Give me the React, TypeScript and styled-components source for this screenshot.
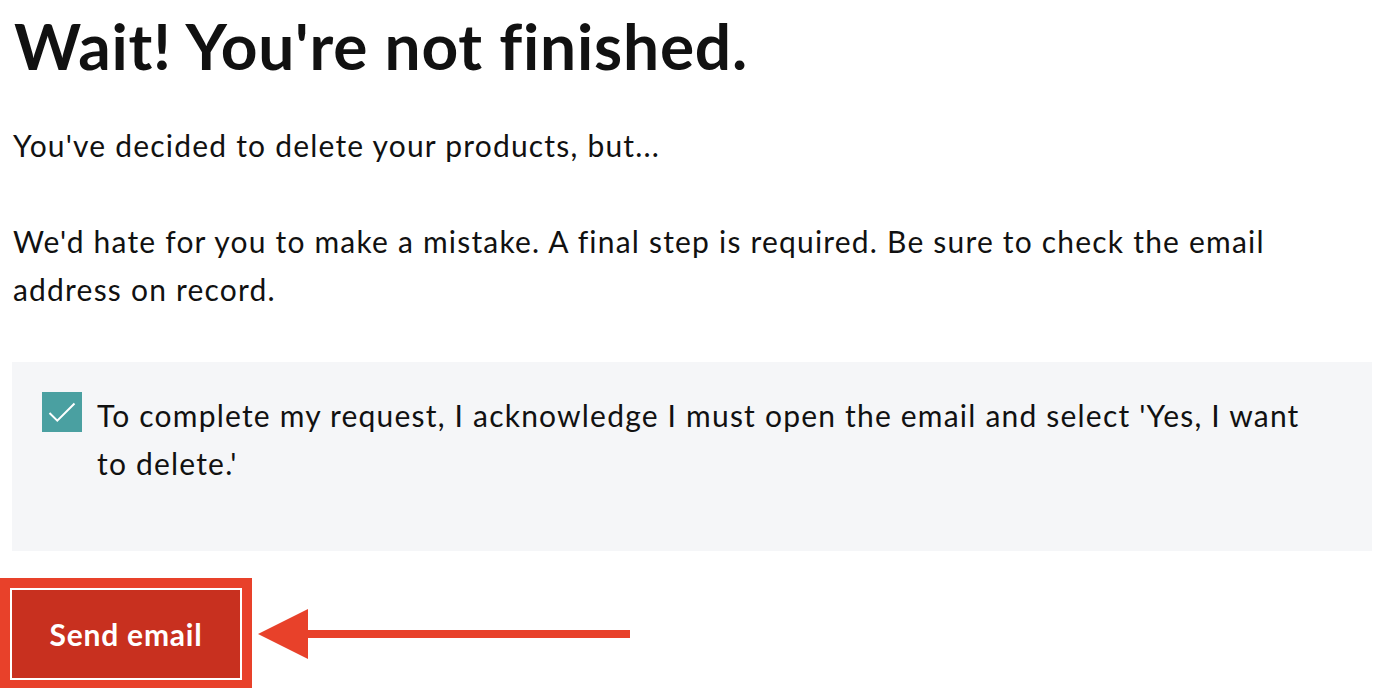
import React from "react";
import styled, { createGlobalStyle } from "styled-components";

const GlobalStyle = createGlobalStyle`
  html, body {
    margin: 0;
    padding: 0;
    background: #ffffff;
  }
  body {
    font-family: "Lato", "Liberation Sans", sans-serif;
    color: #111111;
    -webkit-font-smoothing: antialiased;
  }
`;

const Page = styled.main`
  padding: 8px 10px 0 12px;
  overflow: hidden;
  height: 688px;
  box-sizing: border-box;
`;

const Heading = styled.h1`
  margin: 0 0 36px 2px;
  font-size: 64px;
  line-height: 1.2;
  font-weight: 700;
  letter-spacing: 0.8px;
  color: #111111;
`;

const Paragraph = styled.p<{ $gap?: number }>`
  margin: 0 0 ${(p) => p.$gap ?? 48}px 1px;
  font-size: 30px;
  line-height: 48px;
  font-weight: 400;
  letter-spacing: 1.2px;
  color: #111111;
`;

const Panel = styled.section`
  background: #f5f6f8;
  padding: 29px 30px 64px 30px;
  display: flex;
  align-items: flex-start;
  gap: 15px;
`;

const CheckBox = styled.span`
  flex: 0 0 40px;
  width: 40px;
  height: 40px;
  margin-top: 1px;
  background: #4aa0a1;
  display: flex;
  align-items: center;
  justify-content: center;
`;

const CheckText = styled.label`
  max-width: 1225px;
  font-size: 30px;
  line-height: 48px;
  letter-spacing: 1.2px;
  color: #111111;
`;

const ActionRow = styled.div`
  display: flex;
  align-items: center;
  gap: 6px;
  margin: 27px 0 0 -12px;
`;

const Highlight = styled.div`
  background: #e8412a;
  padding: 10px;
`;

const Button = styled.button`
  display: flex;
  align-items: center;
  justify-content: center;
  width: 232px;
  height: 92px;
  box-sizing: border-box;
  border: 2px solid #ffffff;
  background: #c8301f;
  color: #ffffff;
  font-family: "Lato", "Liberation Sans", sans-serif;
  font-size: 30px;
  font-weight: 700;
  letter-spacing: 0.8px;
  padding: 0;
  cursor: pointer;
`;

const Arrow = () => (
  <svg width="374" height="50" viewBox="0 0 374 50" aria-hidden="true">
    <polygon points="0,25 50,0 50,50" fill="#e8412a" />
    <rect x="48" y="21" width="324" height="8" fill="#e8412a" />
  </svg>
);

export default function App() {
  return (
    <>
      <GlobalStyle />
      <Page>
        <Heading>Wait! You're not finished.</Heading>
        <Paragraph>You've decided to delete your products, but...</Paragraph>
        <Paragraph $gap={49}>
          We'd hate for you to make a mistake. A final step is required. Be sure to check the email
          address on record.
        </Paragraph>
        <Panel>
          <CheckBox>
            <svg width="40" height="40" viewBox="0 0 40 40" aria-hidden="true">
              <polyline
                points="7.5,21 15.3,28.7 32.5,11.5"
                fill="none"
                stroke="#ffffff"
                strokeWidth="2"
              />
            </svg>
          </CheckBox>
          <CheckText>
            To complete my request, I acknowledge I must open the email and select 'Yes, I want to
            delete.'
          </CheckText>
        </Panel>
        <ActionRow>
          <Highlight>
            <Button>Send email</Button>
          </Highlight>
          <Arrow />
        </ActionRow>
      </Page>
    </>
  );
}
